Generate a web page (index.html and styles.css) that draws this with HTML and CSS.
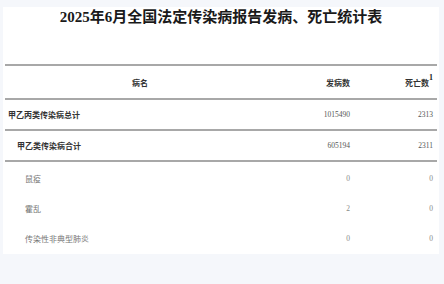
FILE: index.html
```html
<!DOCTYPE html>
<html lang="zh-CN">
<head>
    <meta charset="UTF-8">
    <meta name="viewport" content="width=device-width, initial-scale=1.0">
    <title>2025年6月全国法定传染病报告发病、死亡统计表</title>
    <link rel="stylesheet" href="styles.css">
</head>
<body>
    <div class="panel">
        <h1 class="title">2025年6月全国法定传染病报告发病、死亡统计表</h1>

        <table class="stats">
            <thead>
                <tr>
                    <th class="name-col">病名</th>
                    <th class="num-col">发病数</th>
                    <th class="num-col">死亡数<sup>1</sup></th>
                </tr>
            </thead>
            <tbody>
                <!-- totals -->
                <tr class="total">
                    <td class="lvl1">甲乙丙类传染病总计</td>
                    <td class="num">1015490</td>
                    <td class="num">2313</td>
                </tr>
                <tr class="total">
                    <td class="lvl2">甲乙类传染病合计</td>
                    <td class="num">605194</td>
                    <td class="num">2311</td>
                </tr>
                <!-- single diseases -->
                <tr class="item">
                    <td class="lvl3">鼠疫</td>
                    <td class="num">0</td>
                    <td class="num">0</td>
                </tr>
                <tr class="item">
                    <td class="lvl3">霍乱</td>
                    <td class="num">2</td>
                    <td class="num">0</td>
                </tr>
                <tr class="item">
                    <td class="lvl3">传染性非典型肺炎</td>
                    <td class="num">0</td>
                    <td class="num">0</td>
                </tr>
            </tbody>
        </table>
    </div>
</body>
</html>
```

FILE: styles.css
```css
body {
    margin: 0;
    background-color: #f5f7fb;
    font-family: "Liberation Serif", "Noto Sans CJK SC", serif;
    color: #333;
}

.panel {
    width: 432px;
    height: 247px;
    margin: 7px 0 0 3px;
    padding: 0 2px;
    background-color: #fff;
}

.title {
    margin: 2px 0 37px;
    font-size: 15px;
    line-height: 20px;
    font-weight: 700;
    text-align: center;
    color: #1a1a1a;
}

.stats {
    width: 100%;
    border-collapse: collapse;
    font-size: 8px;
}

.stats th {
    height: 32px;
    padding: 0 4px;
    font-weight: 700;
    color: #333;
    border-top: 2px solid #a8a8a8;
    border-bottom: 2px solid #a8a8a8;
}

.stats .name-col {
    width: 262px;
    text-align: center;
}

.stats .num-col {
    text-align: right;
}

.stats sup {
    font-size: 8px;
    vertical-align: 6px;
    line-height: 0;
    color: #222;
}

.stats td {
    height: 29px;
    padding: 0 4px;
}

.total td {
    border-bottom: 2px solid #a8a8a8;
    font-weight: 700;
    color: #333;
}

.item td {
    height: 27px;
    padding-top: 3px;
    color: #777;
}

.num {
    text-align: right;
    font-size: 7.5px;
}

.total .num {
    font-weight: 400;
    color: #555;
}

.item .num {
    color: #888;
}

/* indent by level in the disease tree */
.stats .lvl1 { padding-left: 3px; }
.stats .lvl2 { padding-left: 12px; }
.stats .lvl3 { padding-left: 20px; }
```
